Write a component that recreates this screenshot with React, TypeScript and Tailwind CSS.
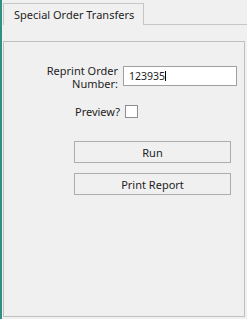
import React from 'react';

const font = { fontFamily: '"Noto Sans", "Open Sans", sans-serif' };

const App: React.FC = () => {
  return (
    <div className="w-[247px] h-[319px] bg-[#f0f0f0] flex text-[11px] text-[#1e1e1e] overflow-hidden" style={font}>
      {/* left accent */}
      <div className="w-[2px] h-full bg-[#2f8f83]"></div>

      <div className="flex-1 flex flex-col pl-px">
        {/* Tab strip */}
        <div className="flex items-end h-[25px]">
          <div className="h-[22px] w-[141px] border-l border-t border-r border-[#c6c6c6] flex items-center pl-[10px] leading-none whitespace-nowrap">
            Special Order Transfers
          </div>
          <div className="flex-1 h-full border-b border-[#c6c6c6]"></div>
        </div>

        {/* Tab page */}
        <div className="mt-[16px] w-[242px] h-[276px] border border-[#c0c0c0] flex flex-col">
          <div className="flex items-start h-[20px] mt-[24px]">
            <div className="w-[114px] text-right leading-[13px] -mt-[2px]">
              Reprint Order
              <br />
              Number:
            </div>
            <div className="ml-[5px] w-[114px] h-[20px] bg-white border border-[#a0a0a0] flex items-center pl-[5px] leading-none text-[10.5px]">
              123935
              <span className="w-px h-[10px] bg-black"></span>
            </div>
          </div>

          <div className="flex items-center mt-[19px]">
            <div className="w-[116px] text-right leading-[13px]">Preview?</div>
            <div className="ml-[5px] w-[13px] h-[13px] bg-white border border-[#8e8e8e]"></div>
          </div>

          <div className="ml-[70px] mt-[23px] flex flex-col gap-[10px]">
            <button className="w-[157px] h-[22px] bg-[#f0f0f0] border border-[#adadad] leading-none">Run</button>
            <button className="w-[157px] h-[22px] bg-[#f0f0f0] border border-[#adadad] leading-none">Print Report</button>
          </div>
        </div>
      </div>
    </div>
  );
};

export default App;
